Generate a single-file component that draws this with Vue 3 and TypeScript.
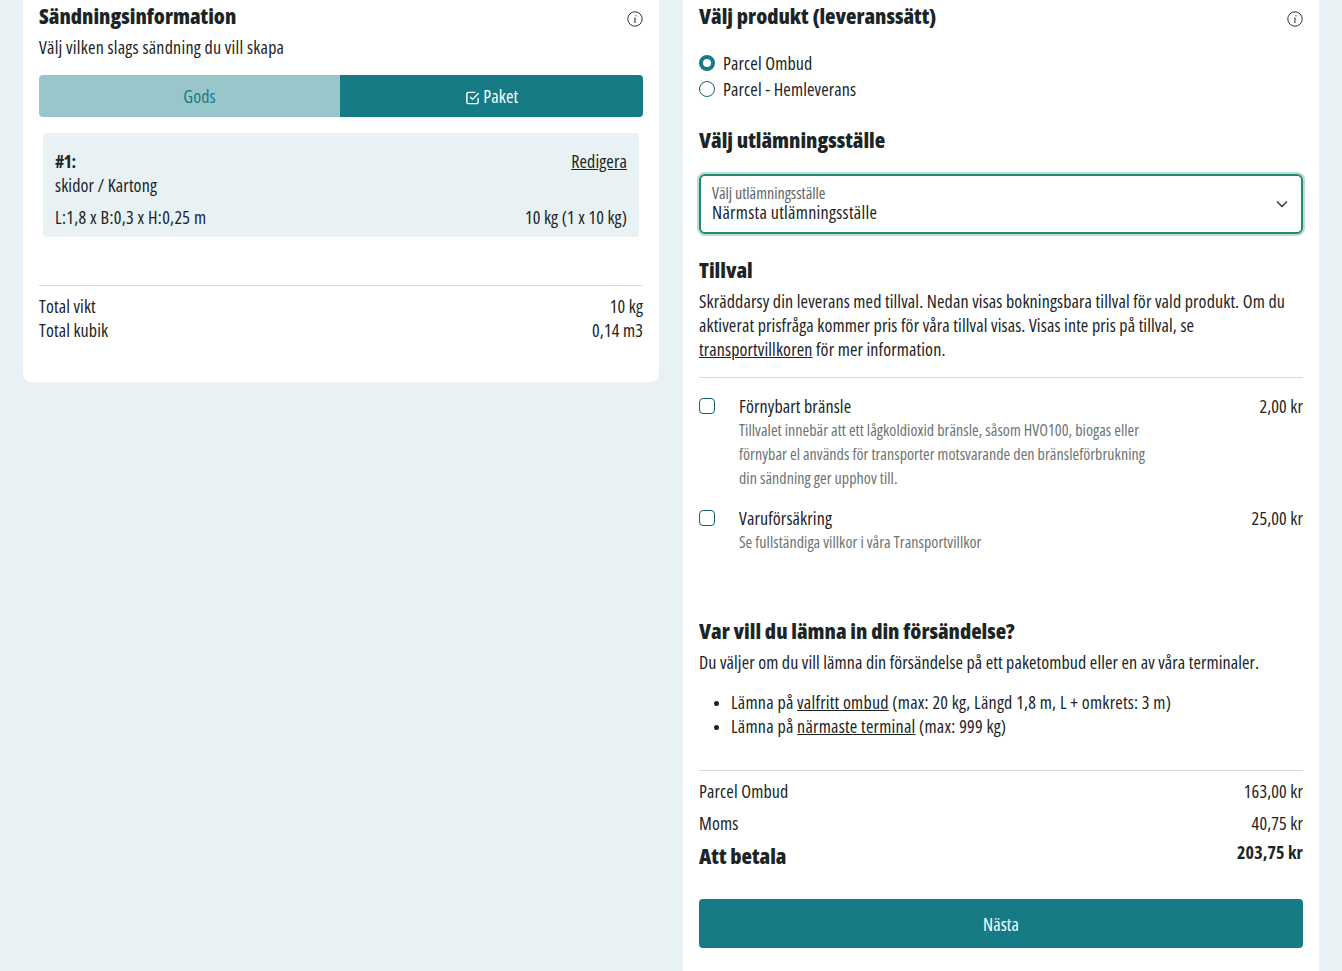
<template>
  <div class="page">
    <section class="card left-card">
      <div class="card-head">
        <h2>Sändningsinformation</h2>
        <svg class="info" viewBox="0 0 16 16"><circle cx="8" cy="8" r="7.2" /><path d="M8.9 4.2v1.1M7 7.3h1.4l-.8 3.8c-.1.5.5.6 1.2.1" /></svg>
      </div>
      <p class="intro">Välj vilken slags sändning du vill skapa</p>
      <div class="toggle">
        <button class="tab gods">Gods</button>
        <button class="tab active">
          <svg viewBox="0 0 16 16"><path d="M14 8.5V13a1.5 1.5 0 0 1-1.5 1.5h-9A1.5 1.5 0 0 1 2 13V4a1.5 1.5 0 0 1 1.5-1.5H11" /><path d="M5.5 7.5 8 10l6.5-6.5" /></svg>
          Paket
        </button>
      </div>
      <div class="package">
        <div class="row"><b>#1:</b><a>Redigera</a></div>
        <div class="pkg-type">skidor / Kartong</div>
        <div class="row"><span class="dims">L:1,8 x B:0,3 x H:0,25 m</span><span>10 kg (1 x 10 kg)</span></div>
      </div>
      <div class="totals">
        <div class="row"><span>Total vikt</span><span>10 kg</span></div>
        <div class="row"><span>Total kubik</span><span>0,14 m3</span></div>
      </div>
    </section>

    <section class="card right-card">
      <div class="card-head">
        <h2>Välj produkt (leveranssätt)</h2>
        <svg class="info" viewBox="0 0 16 16"><circle cx="8" cy="8" r="7.2" /><path d="M8.9 4.2v1.1M7 7.3h1.4l-.8 3.8c-.1.5.5.6 1.2.1" /></svg>
      </div>
      <div class="radios">
        <label v-for="p in products" :key="p.name" class="radio">
          <span class="dot" :class="{ on: p.on }"></span>{{ p.name }}
        </label>
      </div>
      <h2 class="pick-title">Välj utlämningsställe</h2>
      <div class="select">
        <div class="select-value">
          <div class="select-label">Välj utlämningsställe</div>
          <div>Närmsta utlämningsställe</div>
        </div>
        <svg viewBox="0 0 12 8"><path d="M1 1.5 6 6.5l5-5" /></svg>
      </div>
      <h2 class="extras-title">Tillval</h2>
      <p class="extras-text">Skräddarsy din leverans med tillval. Nedan visas bokningsbara tillval för vald produkt. Om du aktiverat prisfråga kommer pris för våra tillval visas. Visas inte pris på tillval, se<br /><a>transportvillkoren</a> för mer information.</p>
      <div class="extras">
        <div v-for="e in extras" :key="e.name" class="extra">
          <span class="check"></span>
          <div class="extra-body">
            <div class="row"><span>{{ e.name }}</span><span>{{ e.price }}</span></div>
            <p class="extra-desc">{{ e.desc }}</p>
          </div>
        </div>
      </div>
      <h2 class="drop-title">Var vill du lämna in din försändelse?</h2>
      <p class="drop-text">Du väljer om du vill lämna din försändelse på ett paketombud eller en av våra terminaler.</p>
      <ul>
        <li>Lämna på <a>valfritt ombud</a> (max: 20 kg, Längd 1,8 m, L + omkrets: 3 m)</li>
        <li>Lämna på <a>närmaste terminal</a> (max: 999 kg)</li>
      </ul>
      <div class="price">
        <div class="row"><span>Parcel Ombud</span><span>163,00 kr</span></div>
        <div class="row"><span>Moms</span><span>40,75 kr</span></div>
        <div class="row total"><h2>Att betala</h2><b>203,75 kr</b></div>
      </div>
      <button class="next">Nästa</button>
    </section>
  </div>
</template>

<script setup lang="ts">
const products = [
  { name: 'Parcel Ombud', on: true },
  { name: 'Parcel - Hemleverans', on: false }
]

const extras = [
  {
    name: 'Förnybart bränsle',
    price: '2,00 kr',
    desc: 'Tillvalet innebär att ett lågkoldioxid bränsle, såsom HVO100, biogas eller förnybar el används för transporter motsvarande den bränsleförbrukning din sändning ger upphov till.'
  },
  {
    name: 'Varuförsäkring',
    price: '25,00 kr',
    desc: 'Se fullständiga villkor i våra Transportvillkor'
  }
]
</script>

<style>
html, body { margin: 0; background: #e8f1f3; overflow: hidden; }
</style>

<style scoped>
.page {
  display: flex;
  align-items: flex-start;
  gap: 24px;
  height: 971px;
  padding-left: 23px;
  box-sizing: border-box;
  overflow: hidden;
  background: #e8f1f3;
  color: #1c2526;
  font: 18px/24px "Open Sans", "Liberation Sans", sans-serif;
  font-stretch: 75%;
  letter-spacing: 0.13px;
}
.card { background: #fff; box-sizing: border-box; padding: 0 16px; }
.left-card { width: 636px; height: 382px; border-radius: 0 0 8px 8px; }
.right-card { width: 636px; height: 990px; }
h2 { margin: 0; font-size: 21.5px; line-height: 32px; font-weight: 800; letter-spacing: 0; }
p { margin: 0; }
a { text-decoration: underline; color: inherit; }
.card-head { display: flex; justify-content: space-between; align-items: flex-start; }
.info { width: 16px; height: 16px; margin-top: 11px; fill: none; stroke: #333; stroke-width: 1; }
.intro { margin-top: 3px; letter-spacing: 0.23px; }
.toggle { display: flex; height: 42px; margin-top: 16px; border-radius: 4px; overflow: hidden; }
.tab { flex: 1; border: 0; padding: 0; background: #99c6ca; color: #167b85; font: inherit; letter-spacing: inherit; }
.tab.gods { flex: 0 0 301px; padding-left: 20px; }
.tab.active { background: #167b85; color: #fff; }
.tab svg { width: 15px; height: 15px; vertical-align: -2px; fill: none; stroke: #fff; stroke-width: 1.5; }
.package { margin: 16px 4px 0; padding: 16px 12px 8px; background: #e8f1f3; border-radius: 4px; }
.package b { letter-spacing: -0.6px; }
.dims { letter-spacing: 0.3px; }
.row { display: flex; justify-content: space-between; }
.pkg-type { margin-bottom: 8px; }
.totals { margin-top: 48px; padding-top: 8px; border-top: 1px solid #d5d9da; }
.radios { margin-top: 18px; }
.radio { display: flex; align-items: center; gap: 8px; height: 26px; }
.dot { width: 16px; height: 16px; box-sizing: border-box; border: 1.3px solid #14626b; border-radius: 50%; }
.dot.on { border: 4px solid #167b85; background: #fff; }
.pick-title { margin-top: 22px; }
.select {
  display: flex; justify-content: space-between; align-items: center;
  height: 60px; box-sizing: border-box; margin-top: 18px; padding: 0 13px 0 11px;
  border: 2px solid #1f8a70; border-radius: 6px; box-shadow: 0 0 0 2px #bddcd8; line-height: 20px;
  letter-spacing: 0.3px;
}
.select-value { padding-bottom: 3px; }
.select-label { font-size: 16px; line-height: 18px; color: #5d6667; letter-spacing: 0; }
.select svg { width: 12px; height: 8px; fill: none; stroke: #333; stroke-width: 1.4; }
.extras-title { margin-top: 20px; }
.extras-text { margin-top: 3px; padding-bottom: 16px; border-bottom: 1px solid #d5d9da; }
.extras { margin-top: 16px; }
.extra { display: flex; gap: 24px; margin-bottom: 16px; }
.check { flex: none; box-sizing: border-box; width: 16px; height: 16px; margin-top: 4px; border: 1.3px solid #14626b; border-radius: 4px; }
.extra-body { flex: 1; }
.extra-desc { width: 412px; font-size: 16px; letter-spacing: 0.05px; color: #6b7374; }
.drop-title { margin-top: 61px; }
.drop-text { margin-top: 3px; letter-spacing: 0.1px; }
ul { margin: 16px 0 0; padding-left: 32px; letter-spacing: 0.24px; }
li::marker { font-size: 14px; }
.price { margin-top: 32px; padding-top: 4px; border-top: 1px solid #d5d9da; }
.price .row { height: 32px; align-items: center; }
.total h2 { padding-top: 2px; }
.total b { margin-bottom: 6px; }
.next {
  display: block; width: 100%; height: 49px; margin-top: 28px; border: 0; border-radius: 4px;
  background: #167b85; color: #fff; font: inherit; letter-spacing: inherit;
}
</style>
